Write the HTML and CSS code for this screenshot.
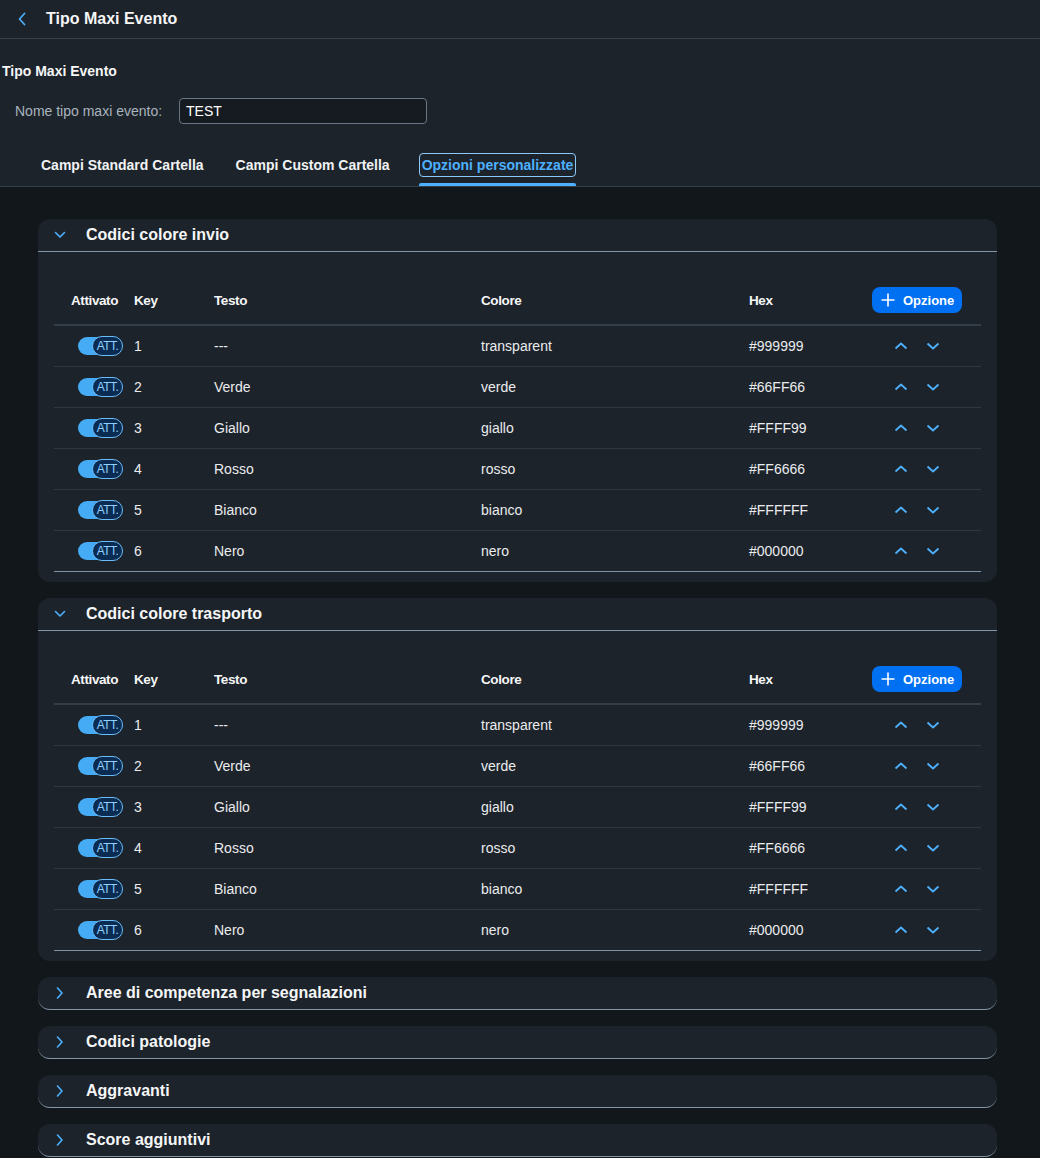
FILE: index.html
```html
<!DOCTYPE html>
<html lang="it">
<head>
<meta charset="utf-8">
<title>Tipo Maxi Evento</title>
<link rel="stylesheet" href="styles.css">
</head>
<body>
<header class="shellbar">
  <span class="back"><svg width="10" height="14" viewBox="0 0 10 14"><path d="M7.5 1.5 L2.5 7 L7.5 12.5" fill="none" stroke="#4db1ff" stroke-width="1.7" stroke-linecap="round" stroke-linejoin="round"/></svg></span>
  <h1 class="shell-title">Tipo Maxi Evento</h1>
</header>

<section class="objheader">
  <h2 class="obj-title">Tipo Maxi Evento</h2>
  <div class="form-row">
    <label class="form-label">Nome tipo maxi evento:</label>
    <div class="input">TEST</div>
  </div>
  <nav class="tabs">
    <div class="tab"><span class="tab-label">Campi Standard Cartella</span><span class="tab-ind"></span></div>
    <div class="tab"><span class="tab-label">Campi Custom Cartella</span><span class="tab-ind"></span></div>
    <div class="tab selected"><span class="tab-label">Opzioni personalizzate</span><span class="tab-ind"></span></div>
  </nav>
</section>

<main class="content">
  <section class="panel">
    <div class="panel-head">
      <span class="chev"><svg width="12" height="8" viewBox="0 0 12 8"><path d="M1.5 1.5 L6 6 L10.5 1.5" fill="none" stroke="#4db1ff" stroke-width="1.6" stroke-linecap="round" stroke-linejoin="round"/></svg></span>
      <span class="panel-title">Codici colore invio</span>
    </div>
    <div class="panel-body">
      <div class="trow thead">
        <div class="c1 th">Attivato</div><div>Key</div><div>Testo</div><div>Colore</div><div>Hex</div>
        <div><button class="add-btn"><svg width="14" height="14" viewBox="0 0 14 14"><path d="M7 0.5 V13.5 M0.5 7 H13.5" stroke="#fff" stroke-width="1.6"/></svg>Opzione</button></div>
      </div>
      <div class="trow"><div class="c1"><span class="switch"><span class="knob">ATT.</span></span></div><div>1</div><div>---</div><div>transparent</div><div>#999999</div><div class="arrows"><span class="arrow"><svg width="14" height="8" viewBox="0 0 14 8"><path d="M1.5 6.5 L7 1.5 L12.5 6.5" fill="none" stroke="#4db1ff" stroke-width="1.8" stroke-linejoin="round"/></svg></span><span class="arrow"><svg width="14" height="8" viewBox="0 0 14 8"><path d="M1.5 1.5 L7 6.5 L12.5 1.5" fill="none" stroke="#4db1ff" stroke-width="1.8" stroke-linejoin="round"/></svg></span></div></div>
      <div class="trow"><div class="c1"><span class="switch"><span class="knob">ATT.</span></span></div><div>2</div><div>Verde</div><div>verde</div><div>#66FF66</div><div class="arrows"><span class="arrow"><svg width="14" height="8" viewBox="0 0 14 8"><path d="M1.5 6.5 L7 1.5 L12.5 6.5" fill="none" stroke="#4db1ff" stroke-width="1.8" stroke-linejoin="round"/></svg></span><span class="arrow"><svg width="14" height="8" viewBox="0 0 14 8"><path d="M1.5 1.5 L7 6.5 L12.5 1.5" fill="none" stroke="#4db1ff" stroke-width="1.8" stroke-linejoin="round"/></svg></span></div></div>
      <div class="trow"><div class="c1"><span class="switch"><span class="knob">ATT.</span></span></div><div>3</div><div>Giallo</div><div>giallo</div><div>#FFFF99</div><div class="arrows"><span class="arrow"><svg width="14" height="8" viewBox="0 0 14 8"><path d="M1.5 6.5 L7 1.5 L12.5 6.5" fill="none" stroke="#4db1ff" stroke-width="1.8" stroke-linejoin="round"/></svg></span><span class="arrow"><svg width="14" height="8" viewBox="0 0 14 8"><path d="M1.5 1.5 L7 6.5 L12.5 1.5" fill="none" stroke="#4db1ff" stroke-width="1.8" stroke-linejoin="round"/></svg></span></div></div>
      <div class="trow"><div class="c1"><span class="switch"><span class="knob">ATT.</span></span></div><div>4</div><div>Rosso</div><div>rosso</div><div>#FF6666</div><div class="arrows"><span class="arrow"><svg width="14" height="8" viewBox="0 0 14 8"><path d="M1.5 6.5 L7 1.5 L12.5 6.5" fill="none" stroke="#4db1ff" stroke-width="1.8" stroke-linejoin="round"/></svg></span><span class="arrow"><svg width="14" height="8" viewBox="0 0 14 8"><path d="M1.5 1.5 L7 6.5 L12.5 1.5" fill="none" stroke="#4db1ff" stroke-width="1.8" stroke-linejoin="round"/></svg></span></div></div>
      <div class="trow"><div class="c1"><span class="switch"><span class="knob">ATT.</span></span></div><div>5</div><div>Bianco</div><div>bianco</div><div>#FFFFFF</div><div class="arrows"><span class="arrow"><svg width="14" height="8" viewBox="0 0 14 8"><path d="M1.5 6.5 L7 1.5 L12.5 6.5" fill="none" stroke="#4db1ff" stroke-width="1.8" stroke-linejoin="round"/></svg></span><span class="arrow"><svg width="14" height="8" viewBox="0 0 14 8"><path d="M1.5 1.5 L7 6.5 L12.5 1.5" fill="none" stroke="#4db1ff" stroke-width="1.8" stroke-linejoin="round"/></svg></span></div></div>
      <div class="trow"><div class="c1"><span class="switch"><span class="knob">ATT.</span></span></div><div>6</div><div>Nero</div><div>nero</div><div>#000000</div><div class="arrows"><span class="arrow"><svg width="14" height="8" viewBox="0 0 14 8"><path d="M1.5 6.5 L7 1.5 L12.5 6.5" fill="none" stroke="#4db1ff" stroke-width="1.8" stroke-linejoin="round"/></svg></span><span class="arrow"><svg width="14" height="8" viewBox="0 0 14 8"><path d="M1.5 1.5 L7 6.5 L12.5 1.5" fill="none" stroke="#4db1ff" stroke-width="1.8" stroke-linejoin="round"/></svg></span></div></div>
    </div>
  </section>

  <section class="panel">
    <div class="panel-head">
      <span class="chev"><svg width="12" height="8" viewBox="0 0 12 8"><path d="M1.5 1.5 L6 6 L10.5 1.5" fill="none" stroke="#4db1ff" stroke-width="1.6" stroke-linecap="round" stroke-linejoin="round"/></svg></span>
      <span class="panel-title">Codici colore trasporto</span>
    </div>
    <div class="panel-body">
      <div class="trow thead">
        <div class="c1 th">Attivato</div><div>Key</div><div>Testo</div><div>Colore</div><div>Hex</div>
        <div><button class="add-btn"><svg width="14" height="14" viewBox="0 0 14 14"><path d="M7 0.5 V13.5 M0.5 7 H13.5" stroke="#fff" stroke-width="1.6"/></svg>Opzione</button></div>
      </div>
      <div class="trow"><div class="c1"><span class="switch"><span class="knob">ATT.</span></span></div><div>1</div><div>---</div><div>transparent</div><div>#999999</div><div class="arrows"><span class="arrow"><svg width="14" height="8" viewBox="0 0 14 8"><path d="M1.5 6.5 L7 1.5 L12.5 6.5" fill="none" stroke="#4db1ff" stroke-width="1.8" stroke-linejoin="round"/></svg></span><span class="arrow"><svg width="14" height="8" viewBox="0 0 14 8"><path d="M1.5 1.5 L7 6.5 L12.5 1.5" fill="none" stroke="#4db1ff" stroke-width="1.8" stroke-linejoin="round"/></svg></span></div></div>
      <div class="trow"><div class="c1"><span class="switch"><span class="knob">ATT.</span></span></div><div>2</div><div>Verde</div><div>verde</div><div>#66FF66</div><div class="arrows"><span class="arrow"><svg width="14" height="8" viewBox="0 0 14 8"><path d="M1.5 6.5 L7 1.5 L12.5 6.5" fill="none" stroke="#4db1ff" stroke-width="1.8" stroke-linejoin="round"/></svg></span><span class="arrow"><svg width="14" height="8" viewBox="0 0 14 8"><path d="M1.5 1.5 L7 6.5 L12.5 1.5" fill="none" stroke="#4db1ff" stroke-width="1.8" stroke-linejoin="round"/></svg></span></div></div>
      <div class="trow"><div class="c1"><span class="switch"><span class="knob">ATT.</span></span></div><div>3</div><div>Giallo</div><div>giallo</div><div>#FFFF99</div><div class="arrows"><span class="arrow"><svg width="14" height="8" viewBox="0 0 14 8"><path d="M1.5 6.5 L7 1.5 L12.5 6.5" fill="none" stroke="#4db1ff" stroke-width="1.8" stroke-linejoin="round"/></svg></span><span class="arrow"><svg width="14" height="8" viewBox="0 0 14 8"><path d="M1.5 1.5 L7 6.5 L12.5 1.5" fill="none" stroke="#4db1ff" stroke-width="1.8" stroke-linejoin="round"/></svg></span></div></div>
      <div class="trow"><div class="c1"><span class="switch"><span class="knob">ATT.</span></span></div><div>4</div><div>Rosso</div><div>rosso</div><div>#FF6666</div><div class="arrows"><span class="arrow"><svg width="14" height="8" viewBox="0 0 14 8"><path d="M1.5 6.5 L7 1.5 L12.5 6.5" fill="none" stroke="#4db1ff" stroke-width="1.8" stroke-linejoin="round"/></svg></span><span class="arrow"><svg width="14" height="8" viewBox="0 0 14 8"><path d="M1.5 1.5 L7 6.5 L12.5 1.5" fill="none" stroke="#4db1ff" stroke-width="1.8" stroke-linejoin="round"/></svg></span></div></div>
      <div class="trow"><div class="c1"><span class="switch"><span class="knob">ATT.</span></span></div><div>5</div><div>Bianco</div><div>bianco</div><div>#FFFFFF</div><div class="arrows"><span class="arrow"><svg width="14" height="8" viewBox="0 0 14 8"><path d="M1.5 6.5 L7 1.5 L12.5 6.5" fill="none" stroke="#4db1ff" stroke-width="1.8" stroke-linejoin="round"/></svg></span><span class="arrow"><svg width="14" height="8" viewBox="0 0 14 8"><path d="M1.5 1.5 L7 6.5 L12.5 1.5" fill="none" stroke="#4db1ff" stroke-width="1.8" stroke-linejoin="round"/></svg></span></div></div>
      <div class="trow"><div class="c1"><span class="switch"><span class="knob">ATT.</span></span></div><div>6</div><div>Nero</div><div>nero</div><div>#000000</div><div class="arrows"><span class="arrow"><svg width="14" height="8" viewBox="0 0 14 8"><path d="M1.5 6.5 L7 1.5 L12.5 6.5" fill="none" stroke="#4db1ff" stroke-width="1.8" stroke-linejoin="round"/></svg></span><span class="arrow"><svg width="14" height="8" viewBox="0 0 14 8"><path d="M1.5 1.5 L7 6.5 L12.5 1.5" fill="none" stroke="#4db1ff" stroke-width="1.8" stroke-linejoin="round"/></svg></span></div></div>
    </div>
  </section>

  <section class="panel collapsed">
    <div class="panel-head">
      <span class="chev"><svg width="8" height="12" viewBox="0 0 8 12"><path d="M1.5 1 L6 6 L1.5 11" fill="none" stroke="#4db1ff" stroke-width="1.6" stroke-linecap="round" stroke-linejoin="round"/></svg></span>
      <span class="panel-title">Aree di competenza per segnalazioni</span>
    </div>
  </section>
  <section class="panel collapsed">
    <div class="panel-head">
      <span class="chev"><svg width="8" height="12" viewBox="0 0 8 12"><path d="M1.5 1 L6 6 L1.5 11" fill="none" stroke="#4db1ff" stroke-width="1.6" stroke-linecap="round" stroke-linejoin="round"/></svg></span>
      <span class="panel-title">Codici patologie</span>
    </div>
  </section>
  <section class="panel collapsed">
    <div class="panel-head">
      <span class="chev"><svg width="8" height="12" viewBox="0 0 8 12"><path d="M1.5 1 L6 6 L1.5 11" fill="none" stroke="#4db1ff" stroke-width="1.6" stroke-linecap="round" stroke-linejoin="round"/></svg></span>
      <span class="panel-title">Aggravanti</span>
    </div>
  </section>
  <section class="panel collapsed">
    <div class="panel-head">
      <span class="chev"><svg width="8" height="12" viewBox="0 0 8 12"><path d="M1.5 1 L6 6 L1.5 11" fill="none" stroke="#4db1ff" stroke-width="1.6" stroke-linecap="round" stroke-linejoin="round"/></svg></span>
      <span class="panel-title">Score aggiuntivi</span>
    </div>
  </section>
</main>
</body>
</html>
```
FILE: styles.css
```css
html, body {
  margin: 0;
  padding: 0;
}
body {
  background: #12171c;
  color: #eaecee;
  font-family: "Liberation Sans", Arial, sans-serif;
  font-size: 14px;
}
h1, h2 {
  margin: 0;
}

.shellbar {
  height: 38px;
  background: #1d232a;
  border-bottom: 1px solid #36414c;
  display: flex;
  align-items: center;
}
.back {
  width: 44px;
  display: flex;
  justify-content: center;
  align-items: center;
}
.back svg {
  display: block;
}
.shell-title {
  margin-left: 2px;
  font-size: 16px;
  font-weight: bold;
  color: #f5f6f7;
}

.objheader {
  background: #1d232a;
}
.obj-title {
  padding: 22px 0 0 2px;
  font-size: 14px;
  font-weight: bold;
  line-height: 20px;
  color: #f5f6f7;
}
.form-row {
  display: flex;
  align-items: center;
  margin-top: 17px;
  padding-left: 15px;
}
.form-label {
  width: 164px;
  color: #a9b4be;
}
.input {
  width: 248px;
  height: 26px;
  box-sizing: border-box;
  border: 1px solid #6a7683;
  border-radius: 4px;
  background: #161b21;
  padding: 0 6px;
  line-height: 24px;
  color: #ffffff;
}

.tabs {
  display: flex;
  margin-top: 19px;
  padding-left: 25px;
  height: 43px;
  border-bottom: 1px solid #353f4a;
}
.tab {
  display: flex;
  flex-direction: column;
  padding: 0 13px;
  font-weight: bold;
  color: #f0f2f4;
}
.tab-label {
  margin-top: 10px;
  height: 24px;
  line-height: 24px;
  padding: 0 3px;
  box-sizing: border-box;
}
.tab-ind {
  margin-top: auto;
  height: 3px;
  border-radius: 2px 2px 0 0;
}
.tab.selected .tab-label {
  color: #4db1ff;
  outline: 1.5px solid #8dc8fa;
  outline-offset: -1.5px;
  border-radius: 4px;
}
.tab.selected .tab-ind {
  background: #4db1ff;
}

.content {
  padding: 32px 43px 40px 38px;
}
.panel {
  background: #1d232a;
  border-radius: 12px;
  margin-bottom: 16px;
}
.panel.collapsed {
  border-bottom: 1px solid #8396a8;
}
.panel-head {
  height: 32px;
  display: flex;
  align-items: center;
}
.panel:not(.collapsed) .panel-head {
  border-bottom: 1px solid #8396a8;
}
.chev {
  width: 44px;
  display: flex;
  justify-content: center;
  align-items: center;
}
.chev svg {
  display: block;
}
.panel-title {
  margin-left: 4px;
  font-size: 16px;
  font-weight: bold;
  color: #f5f6f7;
}

.panel-body {
  padding: 24px 16px 10px;
}
.trow {
  display: grid;
  grid-template-columns: 80px 80px 267px 268px 123px 1fr;
  align-items: center;
  height: 40px;
  border-bottom: 1px solid #2e3844;
}
.trow:last-child {
  border-bottom-color: #7f93a6;
}
.trow.thead {
  height: 48px;
  border-bottom: 2px solid #333e4a;
  font-weight: bold;
  font-size: 13.5px;
  letter-spacing: -0.4px;
  color: #f5f6f7;
}
.c1 {
  padding-left: 24px;
  display: flex;
  align-items: center;
}
.c1.th {
  padding-left: 17px;
}

.switch {
  width: 44px;
  height: 18px;
  border-radius: 9px;
  background: #45abf5;
  display: flex;
  justify-content: flex-end;
  align-items: center;
}
.knob {
  width: 31px;
  height: 20px;
  margin-right: -1px;
  box-sizing: border-box;
  border: 1.5px solid #6cbcf8;
  border-radius: 10px;
  background: #0b2c52;
  color: #8fd0ff;
  font-size: 12px;
  font-weight: normal;
  display: flex;
  justify-content: center;
  align-items: center;
  letter-spacing: -0.6px;
}

.add-btn {
  width: 90px;
  height: 26px;
  border: none;
  border-radius: 8px;
  background: #0070f2;
  color: #ffffff;
  font-family: "Liberation Sans", Arial, sans-serif;
  font-size: 13px;
  font-weight: bold;
  display: flex;
  align-items: center;
  gap: 8px;
  padding: 0 0 0 9px;
  cursor: pointer;
}
.add-btn svg {
  display: block;
}

.arrows {
  display: flex;
  padding-left: 13px;
}
.arrow {
  width: 32px;
  height: 24px;
  display: flex;
  justify-content: center;
  align-items: center;
}
.arrow svg {
  display: block;
}
```
